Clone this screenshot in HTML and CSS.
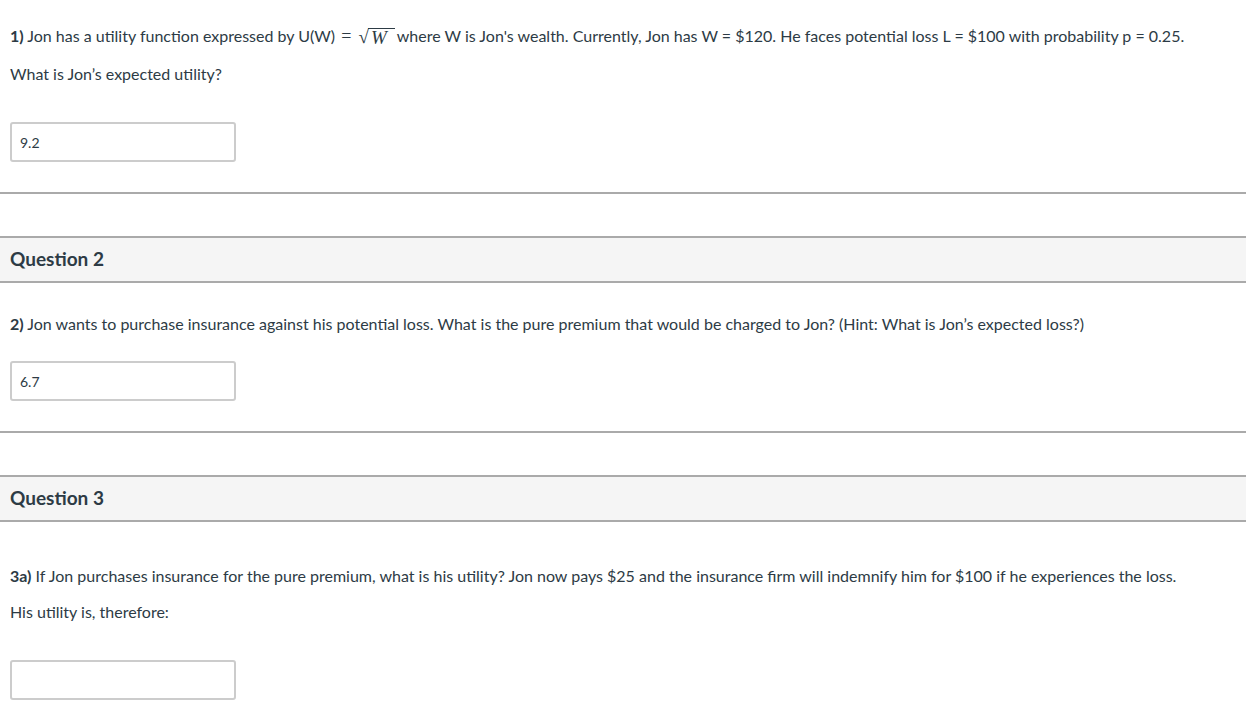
FILE: index.html
```html
<!DOCTYPE html>
<html>
<head>
<meta charset="utf-8">
<link rel="stylesheet" href="styles.css">
</head>
<body>
<div class="page">
  <section class="question first">
    <p class="text line1"><b>1)</b> Jon has a utility function expressed by U(W) <span class="math eq">=</span> <span class="sqrt"><span class="rad">√</span><span class="radicand">W</span></span>where W is Jon's wealth. Currently, Jon has W = $120. He faces potential loss L = $100 with probability p = 0.25.</p>
    <p class="text line2">What is Jon’s expected utility?</p>
    <div class="answer"><input class="box" type="text" value="9.2"></div>
  </section>
  <div class="sep"></div>
  <div class="qhead">Question 2</div>
  <section class="question">
    <p class="text q2"><b>2)</b> Jon wants to purchase insurance against his potential loss. What is the pure premium that would be charged to Jon? (Hint: What is Jon’s expected loss?)</p>
    <div class="answer a2"><input class="box" type="text" value="6.7"></div>
  </section>
  <div class="sep"></div>
  <div class="qhead">Question 3</div>
  <section class="question">
    <p class="text q3"><b>3a)</b> If Jon purchases insurance for the pure premium, what is his utility? Jon now pays $25 and the insurance firm will indemnify him for $100 if he experiences the loss.</p>
    <p class="text q3b">His utility is, therefore:</p>
    <div class="answer a3"><input class="box" type="text" value=""></div>
  </section>
</div>
</body>
</html>
```
FILE: styles.css
```css
html, body {
  margin: 0;
  padding: 0;
  background: #ffffff;
}
body {
  font-family: Lato, "Open Sans", sans-serif;
  color: #2d3b45;
  font-size: 16px;
  width: 1246px;
  overflow: hidden;
}
.page {
  display: flex;
  flex-direction: column;
}
.question {
  padding: 0 10px;
}
.text {
  margin: 0;
  line-height: 20px;
}
.text b {
  font-weight: 700;
}
.line1 {
  margin-top: 26px;
}
.line2 {
  margin-top: 18px;
}
.math {
  font-family: "Liberation Serif", "DejaVu Serif", serif;
}
.eq {
  font-size: 18px;
  margin: 0 2px 0 2px;
}
.sqrt {
  display: inline-flex;
  align-items: flex-end;
  font-family: "Liberation Serif", "DejaVu Serif", serif;
  margin-left: 1px;
  margin-right: 2px;
}
.rad {
  font-size: 19px;
  line-height: 20px;
  position: relative;
  top: 1px;
}
.radicand {
  font-style: italic;
  font-size: 19px;
  line-height: 17px;
  border-top: 1px solid #2d3b45;
  padding: 0 8px 0 3px;
  margin-left: -1px;
}
.answer {
  margin-top: 38px;
  height: 40px;
}
.box {
  box-sizing: border-box;
  width: 226px;
  height: 40px;
  margin: 0;
  border: 2px solid #cccccc;
  border-radius: 3px;
  padding: 0 8px;
  font-family: Lato, sans-serif;
  font-size: 14px;
  color: #2d3b45;
  background: #ffffff;
  outline: none;
}
.sep {
  margin-top: 30px;
  height: 2px;
  background: #aaaaaa;
}
.qhead {
  margin-top: 42px;
  box-sizing: border-box;
  height: 47px;
  border-top: 2px solid #aaaaaa;
  border-bottom: 2px solid #aaaaaa;
  background: #f5f5f5;
  padding: 0 10px;
  font-size: 19px;
  font-weight: 700;
  line-height: 42px;
}
.q2 {
  margin-top: 31px;
}
.a2 {
  margin-top: 27px;
}
.q3 {
  margin-top: 44px;
}
.q3b {
  margin-top: 16px;
}
.a3 {
  margin-top: 38px;
}
```
